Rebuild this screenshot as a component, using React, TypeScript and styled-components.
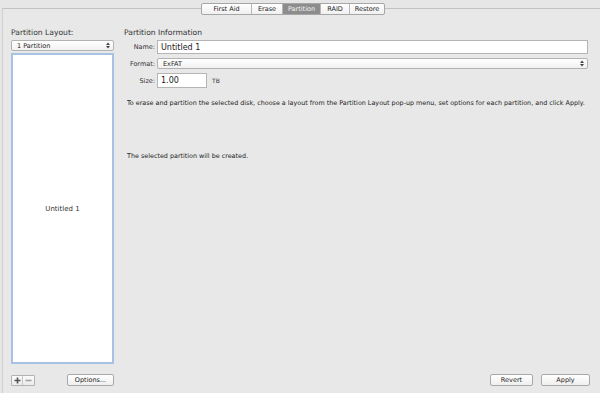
import React from 'react';
import styled, { createGlobalStyle } from 'styled-components';

const GlobalStyle = createGlobalStyle`
  *, *::before, *::after {
    box-sizing: border-box;
  }
  html, body {
    margin: 0;
    padding: 0;
    background: #e6e6e6;
  }
  body {
    font-family: "Lucida Grande", "DejaVu Sans", "Liberation Sans", sans-serif;
    color: #1e1e1e;
  }
`;

const SWindow = styled.div`
  width: 600px;
  height: 393px;
  position: relative;
  overflow: hidden;
  background: #e6e6e6;
`;

const STabBar = styled.div`
  position: absolute;
  top: 3px;
  left: 201px;
  display: flex;
  height: 12px;
  border: 1px solid #a6a6a6;
  border-radius: 2px;
  background: linear-gradient(#ffffff, #f0f0f0);
  z-index: 2;
`;

const STab = styled.div<{ $active?: boolean; $w: number }>`
  width: ${(p) => p.$w}px;
  display: flex;
  align-items: center;
  justify-content: center;
  font-size: 6.5px;
  color: ${(p) => (p.$active ? '#f4f4f4' : '#222')};
  background: ${(p) => (p.$active ? '#8c8c8c' : 'transparent')};
  border-right: 1px solid #b8b8b8;

  &:last-child {
    border-right: none;
  }
`;

const SPanel = styled.div`
  position: absolute;
  top: 8px;
  left: 2px;
  right: -2px;
  bottom: -2px;
  border-top: 1px solid #c2c2c2;
  border-left: 1px solid #d0d0d0;
  background: #e8e8e8;
  display: flex;
  padding: 18px 12px 9px 8px;
  gap: 10px;
`;

const SLeft = styled.div`
  width: 103px;
  display: flex;
  flex-direction: column;
`;

const SHeading = styled.div`
  font-size: 7.6px;
  color: #333;
  height: 11px;
  line-height: 11px;
  margin-bottom: 2px;
`;

const SPopup = styled.div`
  height: 11px;
  flex: none;
  border: 1px solid #b3b3b3;
  border-radius: 2px;
  background: linear-gradient(#ffffff, #f1f1f1);
  font-size: 6.5px;
  display: flex;
  align-items: center;
  justify-content: space-between;
  padding: 0 3px 0 5px;
`;

const SListBox = styled.div`
  margin-top: 2px;
  height: 311px;
  flex: none;
  border: 2px solid #a8c2e6;
  background: #fff;
  display: flex;
  align-items: center;
  justify-content: center;
  font-size: 7px;
  color: #333;
`;

const SFooter = styled.div`
  display: flex;
  align-items: center;
  justify-content: space-between;
  margin-top: 10px;
`;

const SSmallButtons = styled.div`
  display: flex;
  border: 1px solid #b3b3b3;
  border-radius: 1px;
  height: 11px;
  background: linear-gradient(#fafafa, #ececec);
`;

const SSmallButton = styled.div`
  width: 11px;
  display: flex;
  align-items: center;
  justify-content: center;

  &:first-child {
    border-right: 1px solid #c6c6c6;
  }
`;

const SButton = styled.div<{ $w: number }>`
  width: ${(p) => p.$w}px;
  height: 12px;
  border: 1px solid #a9a9a9;
  border-radius: 2px;
  background: linear-gradient(#ffffff, #efefef);
  font-size: 6.5px;
  display: flex;
  align-items: center;
  justify-content: center;
  color: #222;
`;

const SRight = styled.div`
  flex: 1;
  display: flex;
  flex-direction: column;
`;

const SForm = styled.div`
  display: grid;
  grid-template-columns: 31px 1fr;
  column-gap: 2px;
  row-gap: 4px;
  margin-right: 2px;
  align-items: center;
`;

const SLabel = styled.div`
  font-size: 6.5px;
  text-align: right;
  color: #333;
`;

const SInput = styled.div<{ $width?: number; $h: number }>`
  height: ${(p) => p.$h}px;
  border: 1px solid #b5b5b5;
  background: #fff;
  font-size: 8px;
  display: flex;
  align-items: center;
  padding-left: 3px;
  color: #1a1a1a;
  ${(p) => (p.$width ? `width: ${p.$width}px;` : '')}
`;

const SRow = styled.div`
  display: flex;
  align-items: center;
  gap: 5px;
`;

const SUnit = styled.span`
  font-size: 6px;
  color: #333;
`;

const SText = styled.div<{ $mt: number }>`
  font-size: 6.4px;
  color: #222;
  margin-top: ${(p) => p.$mt}px;
  padding-left: 3px;
  white-space: nowrap;
`;

const SSpacer = styled.div`
  flex: 1;
`;

const SActions = styled.div`
  display: flex;
  justify-content: flex-end;
  gap: 8px;
`;

const tabs = [
  { label: 'First Aid', w: 50 },
  { label: 'Erase', w: 31 },
  { label: 'Partition', w: 38, active: true },
  { label: 'RAID', w: 29 },
  { label: 'Restore', w: 34 },
];

const Arrows = () => (
  <svg width="4" height="7" viewBox="0 0 4 7">
    <path d="M0 3 L2 0.5 L4 3 Z M0 4 L2 6.5 L4 4 Z" fill="#444" />
  </svg>
);

const Plus = () => (
  <svg width="7" height="7" viewBox="0 0 7 7">
    <path d="M3.5 0.5 V6.5 M0.5 3.5 H6.5" stroke="#555" strokeWidth="1.6" />
  </svg>
);

const Minus = () => (
  <svg width="7" height="7" viewBox="0 0 7 7">
    <path d="M0.5 3.5 H6.5" stroke="#a0a0a0" strokeWidth="1.6" />
  </svg>
);

const App: React.FC = () => (
  <SWindow>
    <GlobalStyle />
    <STabBar>
      {tabs.map((t) => (
        <STab key={t.label} $w={t.w} $active={t.active}>
          {t.label}
        </STab>
      ))}
    </STabBar>
    <SPanel>
      <SLeft>
        <SHeading>Partition Layout:</SHeading>
        <SPopup>
          <span>1 Partition</span>
          <Arrows />
        </SPopup>
        <SListBox>Untitled 1</SListBox>
        <SFooter>
          <SSmallButtons>
            <SSmallButton>
              <Plus />
            </SSmallButton>
            <SSmallButton>
              <Minus />
            </SSmallButton>
          </SSmallButtons>
          <SButton $w={47}>Options...</SButton>
        </SFooter>
      </SLeft>
      <SRight>
        <SHeading>Partition Information</SHeading>
        <SForm>
          <SLabel>Name:</SLabel>
          <SInput $h={14}>Untitled 1</SInput>
          <SLabel>Format:</SLabel>
          <SPopup>
            <span>ExFAT</span>
            <Arrows />
          </SPopup>
          <SLabel>Size:</SLabel>
          <SRow>
            <SInput $h={15} $width={50}>1.00</SInput>
            <SUnit>TB</SUnit>
          </SRow>
        </SForm>
        <SText $mt={11}>
          To erase and partition the selected disk, choose a layout from the Partition Layout pop-up menu, set options for each partition, and click Apply.
        </SText>
        <SText $mt={45}>The selected partition will be created.</SText>
        <SSpacer />
        <SActions>
          <SButton $w={43}>Revert</SButton>
          <SButton $w={49}>Apply</SButton>
        </SActions>
      </SRight>
    </SPanel>
  </SWindow>
);

export default App;
